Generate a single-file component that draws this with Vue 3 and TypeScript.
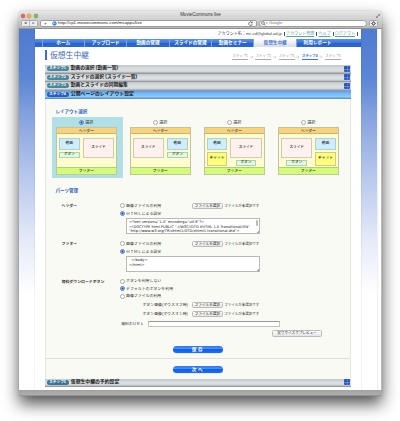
<script setup lang="ts">
interface Step { no: number; title: string; active?: boolean }
interface Card { kind: string; checked: boolean }

const nav: string[] = ['ホーム', 'アップロード', '動画の管理', 'スライドの管理', '動画セミナー', '仮想生中継', '利用レポート']
const crumbs: number[] = [1, 2, 3, 4, 5]
const steps: Step[] = [
  { no: 1, title: '動画の選択 (動画一覧)' },
  { no: 2, title: 'スライドの選択 (スライド一覧)' },
  { no: 3, title: '動画とスライドの同期編集' },
  { no: 4, title: '公開ページのレイアウト設定', active: true },
]
const cards: Card[] = [
  { kind: 'a', checked: true },
  { kind: 'b', checked: false },
  { kind: 'c', checked: false },
  { kind: 'd', checked: false },
]
const headerCode = `<?xml version="1.0" encoding="utf-8"?>
<!DOCTYPE html PUBLIC "-//W3C//DTD XHTML 1.0 Transitional//EN"
"http://www.w3.org/TR/xhtml1/DTD/xhtml1-transitional.dtd">`
const footerCode = `  </body>
</html>`
</script>

<template>
  <div class="stage">
  <main class="window">
    <header class="chrome">
      <div class="titlebar">
        <i class="light red"></i><i class="light amber"></i><i class="light green"></i>
        <span class="wtitle">MovieCommons live</span>
        <svg class="expand" viewBox="0 0 5 5"><path d="M2.8 .5h1.7v1.7M4.5 .5L.5 4.5M.5 2.8v1.7h1.7" /></svg>
      </div>
      <div class="toolbar">
        <div class="arrows"><span>◀</span><span>▶</span></div>
        <div class="address">
          <span class="plus">+</span>
          <svg class="globe" viewBox="0 0 6 6"><circle cx="3" cy="3" r="2.6" fill="#2f7bd6" /><path d="M1.2 2.2l1.6-.8.4 1.4-1 1.4zM4 2.7l1 .4-.8 1.4z" fill="#d9efff" /></svg>
          <span class="url">http://cp1.moviecommons.com/mcapps/live</span>
          <svg class="reload" viewBox="0 0 5 5"><path d="M4 1.6A1.8 1.8 0 1 0 4.3 3M4.3 .5v1.4H2.9" /></svg>
        </div>
        <div class="search">
          <svg viewBox="0 0 7 5"><circle cx="2" cy="2" r="1.4" /><path d="M3 3l1.4 1.5M5 2h1.6" /></svg>
          <span>Google</span>
        </div>
        <div class="gear"><svg viewBox="0 0 6 6"><circle cx="3" cy="3" r="1.5" /><path d="M3 .3v1M3 4.7v1M.3 3h1M4.7 3h1M1.1 1.1l.7.7M4.2 4.2l.7.7M4.9 1.1l-.7.7M1.1 4.9l.7-.7" /></svg></div>
      </div>
    </header>

    <div class="viewport">
      <div class="page">
        <div class="account">
          <span>アカウント名：mc-sd@global.ad.jp</span><b></b><a>アカウント管理</a><b></b><a>ヘルプ</a><b></b><a>ログアウト</a><b></b>
        </div>
        <nav class="nav">
          <span v-for="(n, i) in nav" :key="n" :class="{ on: i === 5 }">{{ n }}</span>
        </nav>
        <div class="heading">
          <h1>仮想生中継</h1>
          <div class="crumbs">
            <template v-for="c in crumbs" :key="c">
              <span class="crumb" :class="{ on: c === 4 }">ステップ{{ c }}</span>
              <svg v-if="c < 5" class="chev" viewBox="0 0 4 4"><path d="M0 2h3M1.7 .6L3.1 2 1.7 3.4" /></svg>
            </template>
          </div>
        </div>

        <div class="content">
          <div v-for="s in steps" :key="s.no" class="step" :class="{ active: s.active }">
            <span class="badge">ステップ{{ s.no }}</span><span class="stitle">{{ s.title }}</span>
            <i v-if="!s.active" class="toggle"></i>
          </div>

          <section class="panel">
            <h2 class="h-layout">レイアウト選択</h2>
            <div class="cards">
              <div v-for="c in cards" :key="c.kind" class="choice" :class="{ sel: c.checked }">
                <label class="pick"><i class="radio" :class="{ on: c.checked }"></i>選択</label>
                <div class="card">
                  <div class="c-head">ヘッダー</div>
                  <div class="c-body" :class="'k-' + c.kind">
                    <div class="col">
                      <div class="box movie">動画</div>
                      <div v-if="c.kind < 'c'" class="box btn">ボタン</div>
                      <div v-else class="box chat">チャット</div>
                    </div>
                    <div class="col wide">
                      <div class="box slide">スライド</div>
                      <div v-if="c.kind > 'b'" class="box btn">ボタン</div>
                    </div>
                  </div>
                  <div class="c-foot">フッター</div>
                </div>
              </div>
            </div>

            <h2 class="h-parts">パーツ管理</h2>

            <div class="group g-head">
              <div class="label">ヘッダー</div>
              <div class="fields">
                <div class="line"><label><i class="radio"></i>画像ファイルの利用</label>
                  <span class="file"><button>ファイルを選択</button>ファイルが未選択です</span></div>
                <div class="line"><label><i class="radio on"></i>ＨＴＭＬによる設定</label></div>
                <div class="area"><pre>{{ headerCode }}</pre><i class="thumb"></i></div>
              </div>
            </div>
            <div class="group g-foot">
              <div class="label">フッター</div>
              <div class="fields">
                <div class="line"><label><i class="radio"></i>画像ファイルの利用</label>
                  <span class="file"><button>ファイルを選択</button>ファイルが未選択です</span></div>
                <div class="line"><label><i class="radio on"></i>ＨＴＭＬによる設定</label></div>
                <div class="area"><pre>{{ footerCode }}</pre></div>
              </div>
            </div>
            <div class="group g-dl">
              <div class="label">資料ダウンロードボタン</div>
              <div class="fields">
                <div class="line"><label><i class="radio"></i>ボタンを利用しない</label></div>
                <div class="line"><label><i class="radio on"></i>デフォルトのボタンを利用</label></div>
                <div class="line"><label><i class="radio"></i>画像ファイルの利用</label></div>
                <div class="line tall"><span class="sub">ボタン画像(マウスオフ時)</span>
                  <span class="file"><button>ファイルを選択</button>ファイルが未選択です</span></div>
                <div class="line tall"><span class="sub">ボタン画像(マウスオン時)</span>
                  <span class="file"><button>ファイルを選択</button>ファイルが未選択です</span></div>
                <div class="line tall urlrow"><span>資料のＵＲＬ</span><i class="input"></i></div>
              </div>
            </div>
            <button class="preview">実寸サイズでプレビュー</button>
            <button class="pill save">保存</button>
            <hr />
            <button class="pill next">次へ</button>
          </section>

          <div class="step last">
            <span class="badge">ステップ5</span><span class="stitle">仮想生中継の予約設定</span><i class="toggle"></i>
          </div>
        </div>
      </div>
    </div>
    <footer class="status"></footer>
  </main>
  </div>
</template>

<style>
body { background: #fff; }
</style>

<style scoped>
* { box-sizing: border-box; }
i { font-style: normal; }
svg { display: block; fill: none; }
button { font: inherit; margin: 0; padding: 0; white-space: nowrap; }
.stage { height: 421px; padding: 11px 0 0 19px; overflow: hidden; }
.window {
  width: 363px; height: 385px; border-radius: 2px 2px 1px 1px;
  font-family: "Liberation Sans", "Noto Sans CJK JP", sans-serif; font-size: 4px; line-height: 1; color: #333;
  white-space: nowrap; display: flex; flex-direction: column; background: #fff;
  box-shadow: 0 8px 16px rgba(0, 0, 0, .68), 0 0 1px rgba(0, 0, 0, .4);
}
.chrome { height: 18px; background: linear-gradient(#e6e6e6, #b9b9b9); border-bottom: 1px solid #929292; border-radius: 2px 2px 0 0; }
.titlebar { height: 8px; display: flex; align-items: center; padding: 1px 2px 0; gap: 2.4px; }
.light { width: 4px; height: 4px; border-radius: 50%; box-shadow: 0 0 0 .4px #0004; }
.red { background: #ed6158; }
.amber { background: #f0b13d; }
.green { background: #7dbd53; }
.wtitle { flex: 1; text-align: center; font-size: 4.5px; color: #333; padding-right: 13px; }
.expand { width: 4px; height: 4px; stroke: #666; stroke-width: .8; }
.toolbar { height: 9px; display: flex; align-items: center; padding: 0 4px 1px 2px; }
.arrows { width: 17px; height: 7px; display: flex; border: 1px solid #aaa; border-radius: 1.5px; background: #eee; margin-right: 2px; flex: none; }
.arrows span { flex: 1; text-align: center; font-size: 2.8px; line-height: 5px; color: #555; }
.arrows span + span { border-left: 1px solid #bbb; color: #888; }
.address { width: 217px; height: 7px; display: flex; align-items: center; border: 1px solid #9f9f9f; border-radius: 2px; background: #fff; padding: 0 3px; flex: none; }
.plus { font-size: 5px; line-height: 4px; width: 8px; color: #666; }
.globe { width: 5px; height: 5px; margin-right: 1px; }
.url { font-size: 4.4px; color: #222; flex: 1; }
.reload { width: 5px; height: 5px; stroke: #555; stroke-width: .8; }
.search { width: 108px; height: 7px; margin-left: 2px; border: 1px solid #9f9f9f; border-radius: 4px; background: #fff; display: flex; align-items: center; padding-left: 1px; gap: 1px; color: #777; font-size: 4.1px; flex: none; }
.search svg { width: 7px; height: 5px; stroke: #555; stroke-width: .7; }
.gear { width: 10px; height: 7px; margin-left: 2px; border: 1px solid #a5a5a5; border-radius: 1.5px; background: #eee; display: grid; place-items: center; }
.gear svg { width: 5px; height: 5px; stroke: #444; stroke-width: 1; }

.viewport { height: 361px; padding: 0 21px 0 16px; background: linear-gradient(90deg, transparent 358px, #ececec 358px, #fff 360px, #fff 362px, #bbb 362px), linear-gradient(#4f7bd0 0, #5c86d6 50px, #8aa6e0 92px, #b9c9ed 150px, #e4eaf8 210px, #fff 265px); }
.page { height: 361px; background: #fff; box-shadow: -1px 0 #0000000b, 1px 0 #0000000b; }
.account { height: 10px; padding: 0 3.4px 0 0; display: flex; align-items: center; justify-content: flex-end; font-size: 4.05px; color: #444; }
.account a { color: #5aa5a8; text-decoration: underline; text-decoration-thickness: .5px; }
.account b { width: .6px; height: 4px; background: #555; margin: 0 1.6px 0 2px; }
.account b:last-child { margin-right: 0; }
.nav { height: 8px; display: flex; padding-left: 6.5px; background: linear-gradient(#5c92ea, #3c74dc 50%, #2862cd 50%, #2b67d4); color: #fff; font-weight: bold; font-size: 4.65px; line-height: 8px; text-align: center; }
.nav span { width: 42.4px; border-left: .5px solid #7ea5ea; }
.nav .on { background: linear-gradient(#fff, #d9dee5); color: #4c7ad2; }
.heading { height: 18px; padding: 3px 10px 0; display: flex; justify-content: space-between; }
h1 { margin: 0; border-left: 2px solid #3d6cc9; height: 10px; padding-left: 3px; font-size: 7.8px; line-height: 11px; font-weight: normal; color: #3f6cbd; }
.crumbs { display: flex; align-items: center; gap: 1.6px; height: 11px; margin-right: 10px; margin-top: 1px; }
.crumb { width: 16px; text-align: center; font-size: 3.4px; color: #999; border-bottom: 1px solid #aaa; line-height: 5px; height: 6px; }
.crumb.on { color: #3c73de; border-color: #3c73de; font-weight: bold; }
.chev { width: 4px; height: 4px; stroke: #ccc; stroke-width: .7; }

.content { margin: 0 10px; display: flex; flex-direction: column; }
.step { height: 8.5px; display: flex; align-items: center; background: linear-gradient(#c1c7cb, #dce1e4 45%, #d1d6d9 78%, #999 88%); padding: 0 1px 1px 1.5px; color: #222; font-size: 4.75px; font-weight: bold; }
.step.active { background: linear-gradient(#5b9df5, #73b9fa 30%, #90ccfd 75%, #5e92c9 90%); font-size: 4.87px; }
.badge { width: 22px; height: 5px; border-radius: 3px; background: #4887a0; color: #fff; font-size: 3.7px; line-height: 5px; text-align: center; margin-right: 2.3px; }
.active .badge { background: #2460bd; }
.last .badge { background: #37749a; }
.toggle { width: 6px; height: 6px; margin-left: auto; background: linear-gradient(90deg, transparent 50%, #8fadf055 50% 67%, transparent 67%), linear-gradient(#2b56c0 50%, #5a84e0 50% 67%, #2d5ccc 67%); border-radius: 1px; }
.step.last { font-size: 4.85px; }

.panel { height: 279.5px; background: #f9faf4; border: 1px solid #e6e7e4; border-top: 0; border-bottom: 0; display: flex; flex-direction: column; }
h2 { margin: 0; font-size: 4.55px; line-height: 6px; height: 6px; color: #3366c6; padding-left: 9.4px; }
.h-layout { margin-top: 9.7px; }
.cards { display: flex; margin: 2.3px 0 0 6px; gap: 2.7px; }
.choice { width: 71.3px; height: 61.5px; padding: 3px 6.3px 0 3.7px; }
.sel { background: #b0dfe5; }
.pick { display: flex; align-items: center; justify-content: center; height: 6px; font-size: 4px; gap: .8px; }
.radio { width: 5px; height: 5px; border: 1px solid #aaa; border-radius: 50%; background: #fff; flex: none; }
.radio.on { border-color: #5a83bd; background: radial-gradient(circle, #173d83 0 .7px, #a9d0f7 1.2px); }
.card { height: 48px; margin-top: 1px; background: #fffcd0; border: .5px solid #c4c3a1; font-size: 3.8px; font-weight: 500; text-align: center; display: flex; flex-direction: column; }
.c-head, .c-foot { height: 6.5px; line-height: 6px; background: #fad279; border-bottom: 1px solid #cdb37b; }
.c-foot { background: #d3fd78; border: 0; border-top: 1px solid #b1ce7c; }
.c-body { flex: 1; display: flex; padding: 3.5px 2.3px 0; gap: 3px; align-items: flex-start; }
.k-b, .k-d { flex-direction: row-reverse; }
.col { display: flex; flex-direction: column; gap: 2px; width: 20.7px; }
.wide { width: 31.5px; align-items: center; }
.box { border: 1px solid #ccc9bd; display: grid; place-items: center; }
.movie { height: 12px; background: #cceeff; border-color: #b3cdd4; }
.btn { height: 6px; width: 20.7px; background: #ddfde0; border-color: #b5cfb2; font-size: 3.6px; }
.chat { height: 14px; background: #ffff7c; border-color: #cdcc83; }
.slide { height: 20px; width: 31.5px; background: #fff2ee; font-size: 3.6px; }

.h-parts { margin-top: 9.5px; }
.group { display: flex; padding-left: 15.6px; line-height: 8px; font-size: 3.93px; }
.g-head { margin-top: 7.7px; height: 38px; }
.g-foot { height: 38px; }
.g-dl { height: 47px; }
.label { width: 58.6px; font-weight: bold; color: #333; font-size: 3.9px; }
.fields { flex: 1; }
.line { display: flex; height: 8.2px; align-items: center; }
.line label { display: flex; align-items: center; gap: .8px; width: 71.7px; }
.file { display: flex; align-items: center; gap: 1.5px; font-size: 3.5px; line-height: 6px; }
.file button { width: 31px; height: 6px; border: 1px solid #bbb; border-radius: 1.5px; background: linear-gradient(#fff, #e7e7e7); color: #222; line-height: 4px; font-size: 3.6px; }
.area { width: 134px; height: 16px; margin: .2px 0 0 6.3px; border: 1px solid #b9b9b9; background: linear-gradient(135deg, transparent 98%, #aaa 98%), #fff; padding: 1px 1px 0 1.5px; display: flex; justify-content: space-between; }
pre { margin: 0; font-family: "DejaVu Sans", sans-serif; font-size: 3.6px; line-height: 4.3px; color: #222; }
.thumb { width: 2px; height: 6px; background: #bbb; border-radius: 1px; }
.g-dl .line { height: 7.4px; }
.g-dl .line.tall { height: 9.7px; }
.sub { width: 71.7px; padding-right: 4px; text-align: right; font-size: 3.9px; }
.urlrow { font-size: 3.8px; gap: 4px; padding-left: 1px; }
.input { width: 132.5px; height: 6px; background: #fff; border: 1px solid #c2c2c2; border-top-color: #999; }
.preview { margin: 5.6px 0 0 226px; width: 50px; height: 6.4px; flex: none; border: 1px solid #bdbdbd; border-radius: 1.5px; background: linear-gradient(#fff, #e3e3e3); color: #222; font-size: 3.6px; line-height: 4px; }
.pill { width: 50px; height: 7.3px; flex: none; border: 0; border-radius: 4px; background: linear-gradient(#2d76e8, #4d92fb 40%, #0e5fe8 50%, #1d6cf5); color: #fff; font-size: 4.6px; font-weight: bold; letter-spacing: 1.6px; line-height: 7px; margin-left: 127px; box-shadow: 0 .5px .5px #7773; }
.save { margin-top: 9.2px; }
hr { width: 100%; border: 0; height: 1px; background: #dededa; margin: 4.6px 0 0; flex: none; }
.next { margin-top: 7.3px; }
.status { height: 6px; background: linear-gradient(#a2a2a2, #adadad 75%, #888); border-radius: 0 0 1px 1px; }
</style>
